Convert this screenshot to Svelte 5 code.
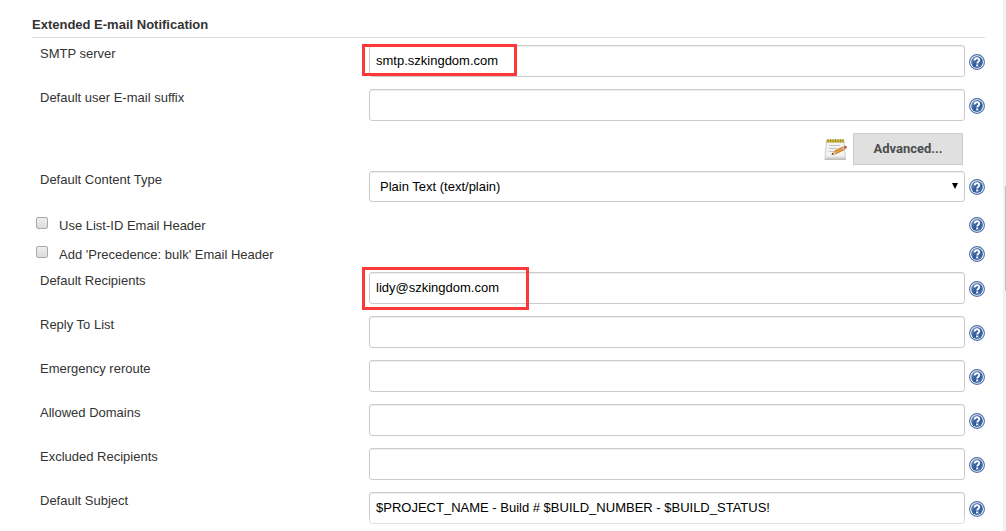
<script>
  const before = [
    { id: 'smtp', label: 'SMTP server', value: 'smtp.szkingdom.com', mark: 'server' },
    { id: 'suffix', label: 'Default user E-mail suffix', value: '' }
  ];
  const checks = [
    { id: 'listid', label: 'Use List-ID Email Header' },
    { id: 'bulk', label: "Add 'Precedence: bulk' Email Header" }
  ];
  const after = [
    { id: 'recipients', label: 'Default Recipients', value: 'lidy@szkingdom.com', mark: 'recipients' },
    { id: 'reply', label: 'Reply To List', value: '' },
    { id: 'reroute', label: 'Emergency reroute', value: '' },
    { id: 'domains', label: 'Allowed Domains', value: '' },
    { id: 'excluded', label: 'Excluded Recipients', value: '' },
    { id: 'subject', label: 'Default Subject', value: '$PROJECT_NAME - Build # $BUILD_NUMBER - $BUILD_STATUS!' }
  ];
</script>

{#snippet help()}
  <button type="button" class="help" aria-label="Help">
    <svg width="16" height="16" viewBox="0 0 16 16">
      <defs>
        <linearGradient id="blue" x1="0" y1="0" x2="1" y2="1">
          <stop offset="0" stop-color="#8aa6ce" />
          <stop offset="0.5" stop-color="#2f5997" />
          <stop offset="1" stop-color="#4674b3" />
        </linearGradient>
      </defs>
      <circle cx="8" cy="8" r="7.4" fill="#fff" stroke="#4a70a6" stroke-width="1.1" />
      <circle cx="8" cy="8" r="5.900" fill="url(#blue)" />
      <path d="M5.800 6.400C5.700 3.400 10.400 3.500 10.300 6.100C10.300 7.700 8.200 7.700 8.200 9.500" fill="none" stroke="#fff" stroke-width="1.900" />
      <rect x="7.200" y="10.500" width="2" height="1.900" fill="#fff" />
    </svg>
  </button>
{/snippet}

{#snippet field(item)}
  <div class="row">
    <label for={item.id}>{item.label}</label>
    <div class="control">
      <input id={item.id} type="text" value={item.value} />
      {#if item.mark}<span class="mark {item.mark}"></span>{/if}
    </div>
    {@render help()}
  </div>
{/snippet}

<div class="page">
  <form>
    <h2>Extended E-mail Notification</h2>
    {#each before as item}{@render field(item)}{/each}

    <div class="advanced">
      <svg width="24" height="24" viewBox="0 0 24 24" aria-hidden="true">
        <path d="M1 21h20.500l.5 1.800h-21.500z" fill="#aaaaa7" />
        <path d="M2.500 4h17.500L21.500 21.500H1z" fill="#f3f3f1" stroke="#bbbab5" stroke-width=".7" />
        <path d="M1.300 19.500h20v2H1z" fill="#dadad7" />
        <path d="M2.500 2.500h17.500v3h-17.500z" fill="#c9b53c" />
        <path d="M4 2v3.500M6.500 2v3.500M9 2v3.500M11.500 2v3.500M14 2v3.500M16.500 2v3.500M19 2v3.500" stroke="#97852a" stroke-width=".8" />
        <path d="M5 8.500h11M5 11.500h8M4.500 14.500h5" stroke="#c4c6c9" />
        <path d="M8 17.500l2.500-3.500 8.500-4 1.500 2.500-8.500 4.200z" fill="#e99a33" stroke="#a9651f" stroke-width=".7" />
        <path d="M18 10.300l1.600-.8 1.600 2.600-1.700.8z" fill="#b9bec2" />
        <path d="M19.500 9.500l1.600-.8c1.400-.3 2.300 1.500 1.400 2.500l-1.400.9z" fill="#c35542" />
        <path d="M8 17.500l2.300-3.300 1.500 2.400z" fill="#efd4a0" />
        <path d="M7.500 17.800l1.300-2 .9 1.400z" fill="#333" />
      </svg>
      <button type="button">Advanced...</button>
    </div>

    <div class="row select-row">
      <label for="content-type">Default Content Type</label>
      <div class="control">
        <select id="content-type"><option>Plain Text (text/plain)</option></select>
        <svg class="arrow" width="6" height="6" viewBox="0 0 6 6"><path d="M0 0h6L3 6z" /></svg>
      </div>
      {@render help()}
    </div>

    {#each checks as item}
      <div class="check-row">
        <input id={item.id} type="checkbox" />
        <label for={item.id}>{item.label}</label>
        {@render help()}
      </div>
    {/each}

    <div class="recipients-group">
      {#each after as item}{@render field(item)}{/each}
    </div>
  </form>
  <div class="track"><div class="thumb"></div></div>
  <div class="fade"></div>
</div>

<style>
  :global(body) {
    margin: 0;
    background: #fff;
  }
  .page {
    position: relative;
    display: flex;
    height: 100vh;
    overflow: hidden;
    font: 13px/16px "Liberation Sans", Arial, sans-serif;
    color: #333;
  }
  form {
    flex: 1;
    min-width: 0;
    padding: 17px 18px 0 32px;
  }
  h2 {
    margin: 0 0 7px;
    padding-bottom: 4px;
    border-bottom: 1px solid #ddd;
    font-size: 13px;
    line-height: 16px;
  }
  .row {
    display: grid;
    grid-template-columns: 337px minmax(0, 1fr) 16px;
    align-items: start;
    margin-bottom: 12px;
  }
  .row label {
    padding: 1px 0 0 8px;
  }
  .control {
    position: relative;
    margin-right: 4px;
  }
  .control input,
  select {
    display: block;
    box-sizing: border-box;
    width: 100%;
    height: 32px;
    margin: 0;
    padding: 0 6px 2px;
    border: 1px solid #ccc;
    border-radius: 3px;
    background: #fff;
    box-shadow: inset 0 1px 1px rgba(0, 0, 0, 0.075);
    font: inherit;
    color: #000;
  }
  select {
    height: 31px;
    padding: 0 10px;
    appearance: none;
  }
  .arrow {
    position: absolute;
    top: 12px;
    right: 7px;
    pointer-events: none;
  }
  .help {
    display: block;
    width: 16px;
    height: 16px;
    padding: 0;
    border: 0;
    background: none;
  }
  .row .help {
    margin-top: 9px;
  }
  .select-row .help {
    margin-top: 8px;
  }
  .check-row .help {
    margin-bottom: 2px;
  }
  .help svg {
    display: block;
  }
  .mark {
    position: absolute;
    left: -7px;
    box-sizing: border-box;
    border: 3px solid #fc3838;
    pointer-events: none;
  }
  .server {
    top: -1px;
    width: 155px;
    height: 32px;
  }
  .recipients {
    top: -5px;
    width: 167px;
    height: 43px;
  }
  .advanced {
    display: flex;
    align-items: center;
    justify-content: flex-end;
    gap: 5px;
    margin: 0 22px 6px 0;
  }
  .advanced button {
    width: 110px;
    height: 32px;
    padding: 0;
    border: 1px solid #ccc;
    background: #e0e0e0;
    font: bold 13px/16px Roboto, "Liberation Sans", sans-serif;
    color: #4d4d4d;
  }
  .select-row {
    margin-bottom: 9px;
  }
  .check-row {
    display: flex;
    align-items: center;
    height: 29px;
    padding-left: 4px;
  }
  .check-row input {
    appearance: none;
    box-sizing: border-box;
    width: 12px;
    height: 12px;
    margin: 0 11px 6px 0;
    border: 1px solid #aaa;
    border-radius: 2px;
    background: linear-gradient(#eee, #dcdcdc);
  }
  .check-row label {
    flex: 1;
  }
  .recipients-group {
    padding-top: 3px;
  }
  .track {
    width: 3px;
    padding-top: 186px;
    box-sizing: border-box;
    background: #f1f1f1;
  }
  .thumb {
    height: 105px;
    margin-left: 2px;
    background: #c1c1c1;
  }
  .fade {
    position: absolute;
    right: 3px;
    bottom: 0;
    left: 0;
    height: 16px;
    background: linear-gradient(rgba(255, 255, 255, 0), rgba(255, 255, 255, 0.9));
    pointer-events: none;
  }
</style>
